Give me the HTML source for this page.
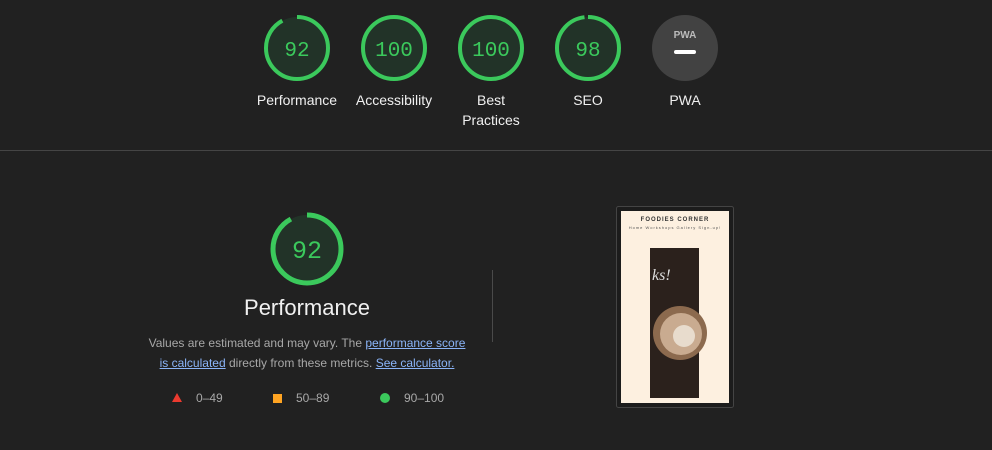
<!DOCTYPE html>
<html><head><meta charset="utf-8"><style>
body{margin:0;width:992px;height:450px;background:#212121;font-family:"Liberation Sans",Arial,sans-serif;position:relative;overflow:hidden;color:#e8e8e8}
.lbl{position:absolute;width:100px;text-align:center;font-size:14px;line-height:20px;color:#f0f0f0}
.num{font-family:"Liberation Mono",monospace;fill:#3bc95c}
a{color:#8ab4f8;text-decoration:underline}
</style></head><body>
<svg style="position:absolute;left:0;top:0" width="992" height="450">
 <g>
  <circle cx="297" cy="48" r="31" fill="#223328" stroke="#3bc95c" stroke-width="4" stroke-dasharray="179.2 200" transform="rotate(-90 297 48)"/>
  <text x="297" y="56" text-anchor="middle" font-size="21" class="num">92</text>
  <circle cx="394" cy="48" r="31" fill="#223328" stroke="#3bc95c" stroke-width="4"/>
  <text x="394" y="56" text-anchor="middle" font-size="21" class="num">100</text>
  <circle cx="491" cy="48" r="31" fill="#223328" stroke="#3bc95c" stroke-width="4"/>
  <text x="491" y="56" text-anchor="middle" font-size="21" class="num">100</text>
  <circle cx="588" cy="48" r="31" fill="#223328" stroke="#3bc95c" stroke-width="4" stroke-dasharray="190.9 200" transform="rotate(-90 588 48)"/>
  <text x="588" y="56" text-anchor="middle" font-size="21" class="num">98</text>
  <circle cx="685" cy="48" r="33" fill="#424242"/>
  <text x="685" y="38" text-anchor="middle" font-size="10" font-weight="bold" fill="#bbb" font-family="Liberation Sans">PWA</text>
  <rect x="674" y="50" width="22" height="4" rx="2" fill="#fff"/>
 </g>
 <line x1="0" y1="150.5" x2="992" y2="150.5" stroke="#454545"/>
 <line x1="492.5" y1="270" x2="492.5" y2="342" stroke="#4a4a4a"/>
 <circle cx="307" cy="249" r="34" fill="#223328" stroke="#3bc95c" stroke-width="5" stroke-dasharray="196.5 220" transform="rotate(-90 307 249)"/>
 <text x="307" y="258" text-anchor="middle" font-size="25" class="num">92</text>
 <polygon points="177,393 182,402 172,402" fill="#eb3a2f"/>
 <rect x="273" y="394" width="9" height="9" fill="#ffa422"/>
 <circle cx="385" cy="398" r="5" fill="#3bc95c"/>
 <rect x="616.5" y="206.5" width="117" height="201" rx="2" fill="#1c1c1c" stroke="#444"/>
 <rect x="621" y="211" width="108" height="192" fill="#fdf0e0"/>
 <rect x="650" y="248" width="49" height="150" fill="#2b211c"/>
 <circle cx="680" cy="333" r="27" fill="#8c6a4e"/>
 <circle cx="681" cy="334" r="21" fill="#c9ab90"/>
 <circle cx="684" cy="336" r="11" fill="#e8dccd"/>
 <text x="652" y="280" font-size="16" fill="#ddd" font-style="italic" font-family="Liberation Serif">ks!</text>
 <text x="675" y="221" text-anchor="middle" font-size="6" font-weight="bold" fill="#333" letter-spacing="1">FOODIES CORNER</text>
 <text x="675" y="229" text-anchor="middle" font-size="4" fill="#555" letter-spacing="1">Home Workshops Gallery Sign-up!</text>
</svg>
<div class="lbl" style="left:247px;top:90px">Performance</div>
<div class="lbl" style="left:344px;top:90px">Accessibility</div>
<div class="lbl" style="left:441px;top:90px">Best<br>Practices</div>
<div class="lbl" style="left:538px;top:90px">SEO</div>
<div class="lbl" style="left:635px;top:90px">PWA</div>
<div style="position:absolute;left:157px;width:300px;top:295px;text-align:center;font-size:22px;color:#f0f0f0">Performance</div>
<div style="position:absolute;left:146px;width:322px;top:333px;text-align:center;font-size:12px;line-height:20px;color:#a8a8a8">Values are estimated and may vary. The <a>performance score is calculated</a> directly from these metrics. <a>See calculator.</a></div>
<div style="position:absolute;left:196px;top:391px;font-size:12px;color:#a8a8a8">0–49</div>
<div style="position:absolute;left:296px;top:391px;font-size:12px;color:#a8a8a8">50–89</div>
<div style="position:absolute;left:404px;top:391px;font-size:12px;color:#a8a8a8">90–100</div>
</body></html>
